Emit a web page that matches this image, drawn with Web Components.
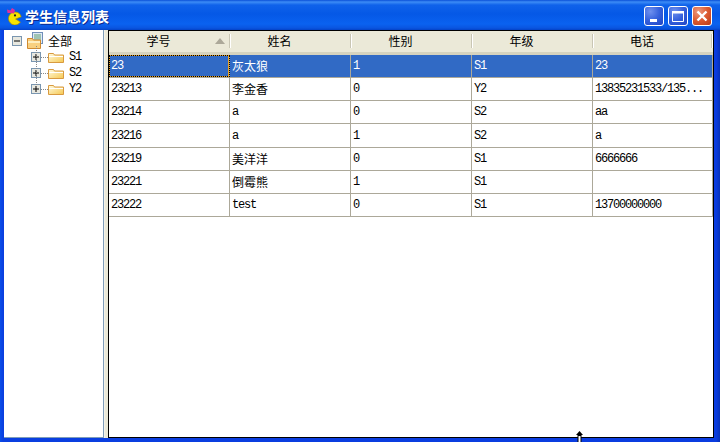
<!DOCTYPE html>
<html lang="zh">
<head>
<meta charset="utf-8">
<title>学生信息列表</title>
<style>
  html, body { margin: 0; padding: 0; background: #0a3ce0; }
  body { font-family: "Liberation Mono", "Noto Sans CJK SC", monospace; }
</style>
</head>
<body>
<xp-window caption="学生信息列表">
  <tree-panel slot="left">
    <tree-node root label="全部"></tree-node>
    <tree-node label="S1"></tree-node>
    <tree-node label="S2"></tree-node>
    <tree-node label="Y2"></tree-node>
  </tree-panel>
  <data-grid slot="right">
    <grid-row selected cells='["23","灰太狼","1","S1","23"]'></grid-row>
    <grid-row cells='["23213","李金香","0","Y2","13835231533/135..."]'></grid-row>
    <grid-row cells='["23214","a","0","S2","aa"]'></grid-row>
    <grid-row tall cells='["23216","a","1","S2","a"]'></grid-row>
    <grid-row cells='["23219","美洋洋","0","S1","6666666"]'></grid-row>
    <grid-row cells='["23221","倒霉熊","1","S1",""]'></grid-row>
    <grid-row cells='["23222","test","0","S1","13700000000"]'></grid-row>
  </data-grid>
</xp-window>

<script>
const mono = `"Liberation Mono", "Noto Sans CJK SC", monospace`;
const columns = '121px 121px 121px 121px 120px';

class XpWindow extends HTMLElement {
  constructor() {
    super();
    this.attachShadow({ mode: 'open' });
  }
  connectedCallback() {
    this.shadowRoot.innerHTML = `
    <style>
      :host { display: flex; flex-direction: column; position: relative; width: 720px; height: 442px; overflow: hidden;
        background: linear-gradient(90deg, #0a4fe8 0, #0a3fe0 3px, #0a3ce0 716px, #0631b8 720px); }
      .title { flex: 0 0 30px; display: flex; align-items: center; box-sizing: border-box; padding: 0 8px 0 6px;
        background: linear-gradient(180deg, #0a50d8 0, #3c8cf6 2px, #0f62ea 5px, #0558e6 14px, #0a62f0 24px, #0a55e0 28px, #0342c8 30px); }
      .logo { width: 17px; height: 18px; margin-right: 2px; margin-top: 2px; }
      .caption { flex: 1; color: #fff; font: bold 14px "Noto Sans CJK SC", sans-serif; line-height: 16px; text-shadow: 1px 1px 0 #0a2a90; margin-top: 1px; }
      .btn { width: 20px; height: 20px; box-sizing: border-box; border: 1px solid #fff; border-radius: 3px; margin-left: 4px; margin-top: 2px;
        display: flex; align-items: center; justify-content: center; }
      .btn svg { display: block; }
      .btn.blue { background: radial-gradient(circle at 30% 25%, #6f90ee 0, #3560dc 50%, #1f44c4 100%); }
      .btn.red { background: radial-gradient(circle at 30% 25%, #ec9a80 0, #dc5a30 50%, #b83a18 100%); }
      .body { flex: 1; display: flex; min-height: 0; padding: 0 6px 4px 4px; }
      .split { flex: 0 0 4px; background: #ebe9d8; box-shadow: inset 1px 0 0 #f4f3ea; }
      ::slotted([slot=left]) { flex: 0 0 100px; }
      ::slotted([slot=right]) { flex: 1; }
      .cursor { position: absolute; left: 575px; top: 431px; }
    </style>
    <div class="title">
      <svg class="logo" viewBox="0 0 17 18">
        <path d="M9 5a6.500 6.500 0 1 0 5.400 10.100L9.600 12l5.600-2.200A6.500 6.500 0 0 0 9 5z" fill="#f8e400" stroke="#a88a00" stroke-width=".7"/>
        <circle cx="9" cy="8.400" r="1.100" fill="#222"/>
        <path d="M1 2.500l3.500 1L6 1l3 2-1 3.500-3.500-.5L1.500 6z" fill="#e0309a"/>
      </svg>
      <span class="caption">${this.getAttribute('caption')}</span>
      <div class="btn blue"><svg width="14" height="14"><rect x="3" y="10" width="7" height="3" fill="#fff"/></svg></div>
      <div class="btn blue"><svg width="14" height="14"><path d="M1.500 2.500h11v10h-11z" fill="none" stroke="#fff"/><rect x="1" y="2" width="12" height="2.500" fill="#fff"/></svg></div>
      <div class="btn red"><svg width="14" height="14"><path d="M2.500 2.500l9 9M11.500 2.500l-9 9" stroke="#fff" stroke-width="2.400"/></svg></div>
    </div>
    <div class="body">
      <slot name="left"></slot>
      <div class="split"></div>
      <slot name="right"></slot>
    </div>
    <svg class="cursor" width="9" height="11" viewBox="0 0 9 11">
      <path d="M4.500 0L8 4H6.500v7h-4V4H1z" fill="#000"/>
      <rect x="3.500" y="5" width="2" height="6" fill="#fff"/>
    </svg>`;
  }
}
customElements.define('xp-window', XpWindow);

class TreePanel extends HTMLElement {
  constructor() {
    super();
    this.attachShadow({ mode: 'open' });
    this.shadowRoot.innerHTML = `
    <style>
      :host { display: block; position: relative; box-sizing: border-box; background: #fff; padding-top: 2px;
        border-right: 1px solid #7f9db9; border-bottom: 1px solid #7f9db9; }
      .rail { position: absolute; left: 32px; top: 16px; height: 39px; border-left: 1px dotted #8a8a8a; }
    </style>
    <div class="rail"></div>
    <slot></slot>`;
  }
}
customElements.define('tree-panel', TreePanel);

class TreeNode extends HTMLElement {
  constructor() {
    super();
    this.attachShadow({ mode: 'open' });
  }
  connectedCallback() {
    const root = this.hasAttribute('root');
    const box = (sign) => `<svg class="box" width="10" height="10" viewBox="0 0 10 10">
        <rect x=".5" y=".5" width="9" height="9" fill="#e8e8e0" stroke="#7a96b0"/>
        <path d="${sign}" stroke="#000"/></svg>`;
    const folder = `<svg class="icon" width="16" height="11" viewBox="0 0 16 11">
        <defs><linearGradient id="f" x1="0" y1="0" x2="1" y2="1"><stop offset="0" stop-color="#fffbe0"/><stop offset="1" stop-color="#f6c850"/></linearGradient></defs>
        <path d="M.5 10.500V1.500h5l1 1.500h9v7.500z" fill="url(#f)" stroke="#d89a40"/>
        <rect x="1" y="4" width="14" height="1" fill="#fff"/></svg>`;
    const bigFolder = `<svg class="icon" width="16" height="17" viewBox="0 0 16 17">
        <rect x="5.500" y=".5" width="10" height="11" fill="#dfe9f6" stroke="#6f8fb8"/>
        <path d="M7 3h7M7 5h7M7 7h7" stroke="#5f9f70"/>
        <path d="M.5 16.500V6.500h5l1 1.500h7v8.500z" fill="#f8d080" stroke="#d08a30"/>
        <rect x="1" y="9" width="12" height="2" fill="#fdeec0"/></svg>`;
    this.shadowRoot.innerHTML = `
    <style>
      :host { display: block; height: ${root ? 17 : 16}px; }
      .row { display: flex; align-items: center; height: 100%; padding-left: ${root ? 8 : 27}px; }
      .box { flex: none; }
      .dots { flex: none; width: 7px; height: 0; border-top: 1px dotted #8a8a8a; }
      .icon { flex: none; margin-left: ${root ? 5 : 0}px; }
      .label { margin-left: 5px; color: #000; font: ${root ? '12px "Noto Sans CJK SC", sans-serif' : '12px ' + mono}; letter-spacing: ${root ? 0 : '-1.200px'}; }
    </style>
    <div class="row">
      ${root ? box('M2 5h6') : box('M2 5h6M5 2v6') + '<span class="dots"></span>'}
      ${root ? bigFolder : folder}
      <span class="label">${this.getAttribute('label')}</span>
    </div>`;
  }
}
customElements.define('tree-node', TreeNode);

class DataGrid extends HTMLElement {
  constructor() {
    super();
    this.attachShadow({ mode: 'open' });
    const heads = ['学号', '姓名', '性别', '年级', '电话'];
    this.shadowRoot.innerHTML = `
    <style>
      :host { display: block; box-sizing: border-box; background: #fff; border: 1px solid #000; }
      .head { display: grid; grid-template-columns: ${columns}; height: 24px; background: #ebe9d8;
        box-shadow: inset 0 -3px 0 #d6d3bf, inset 0 -1px 0 #c5c2ab; }
      .h { position: relative; display: flex; align-items: center; justify-content: center; box-sizing: border-box; height: 19px; padding-right: 22px;
        font: 12px "Noto Sans CJK SC", sans-serif; color: #000; }
      .h::after { content: ""; position: absolute; right: 0; top: 3px; height: 14px; width: 1px; background: #c9c6b4; box-shadow: 1px 0 0 #fff; }
      .h:last-child::after { right: 1px; }
      .sort { position: absolute; right: 5px; top: 7px; width: 0; height: 0;
        border: 5px solid transparent; border-top: 0; border-bottom: 6px solid #aca899; }
    </style>
    <div class="head">
      ${heads.map((h, i) => `<div class="h">${h}${i === 0 ? '<i class="sort"></i>' : ''}</div>`).join('')}
    </div>
    <slot></slot>`;
  }
}
customElements.define('data-grid', DataGrid);

class GridRow extends HTMLElement {
  constructor() {
    super();
    this.attachShadow({ mode: 'open' });
  }
  connectedCallback() {
    const cells = JSON.parse(this.getAttribute('cells'));
    const sel = this.hasAttribute('selected');
    this.shadowRoot.innerHTML = `
    <style>
      :host { display: grid; grid-template-columns: ${columns}; box-sizing: border-box; height: ${this.hasAttribute('tall') ? 24 : 23}px;
        border-bottom: 1px solid #aca899; background: ${sel ? '#316ac5' : '#fff'}; color: ${sel ? '#fff' : '#000'}; }
      .c { box-sizing: border-box; border-right: 1px solid #aca899; padding-left: 2px; overflow: hidden; white-space: nowrap;
        display: flex; align-items: center; font: 12px ${mono}; letter-spacing: -1.200px; }
      .c.cjk { font: 12px "Noto Sans CJK SC", sans-serif; letter-spacing: 0; padding-bottom: 2px; }
      .c.focus { outline: 1px dotted #000; outline-offset: -1px; box-shadow: inset 0 0 0 1px #e8a020; }
    </style>
    ${cells.map((t, i) => `<div class="c${/[^\x00-\x7f]/.test(t) ? ' cjk' : ''}${sel && i === 0 ? ' focus' : ''}">${t}</div>`).join('')}`;
  }
}
customElements.define('grid-row', GridRow);
</script>
</body>
</html>
